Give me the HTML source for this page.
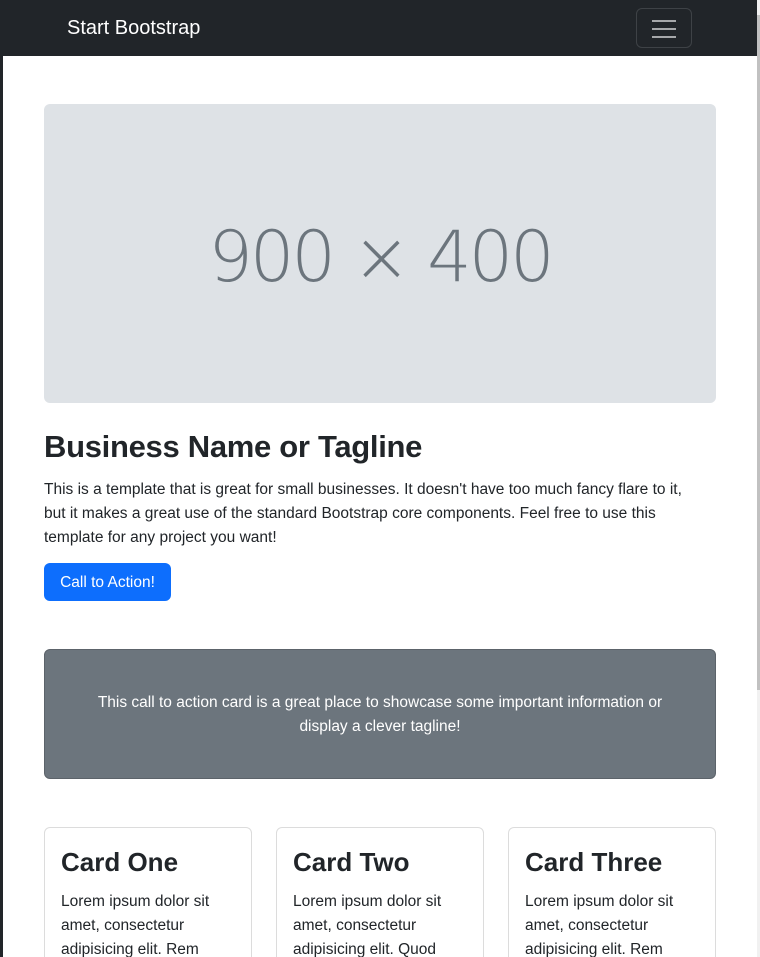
<!DOCTYPE html>
<html><head><meta charset="utf-8"><style>
*{box-sizing:border-box;margin:0;padding:0}
html{width:760px;height:957px;overflow:hidden}
body{width:760px;height:957px;overflow:hidden;background:#212529;font-family:"Liberation Sans","DejaVu Sans",sans-serif;color:#212529;position:relative}
.main{position:absolute;left:3px;top:56px;width:754px;height:901px;background:#fff}
.nav{position:absolute;left:0;top:0;width:757px;height:56px;background:#212529}
.brand{position:absolute;left:67px;top:17px;color:#fff;font-size:20px}
.tog{position:absolute;left:636px;top:8px;width:56px;height:40px;border:1px solid #3e4246;border-radius:6px}
.tog i{position:absolute;left:15px;width:24px;height:2px;background:#a6a8aa}
.sb{position:absolute;left:757px;top:0;width:3px;height:957px;background:#f1f1f1}
.sb i{position:absolute;left:0;top:15px;width:3px;height:675px;background:#c1c1c1}
.abs{position:absolute}
.ph{left:44px;top:104px;width:672px;height:299px;background:#dee2e6;border-radius:6px;color:#6c757d;font-size:70px;text-align:center;line-height:307px;letter-spacing:-3px;font-family:"DejaVu Sans ExtraLight","DejaVu Sans Light","Liberation Sans",sans-serif;font-weight:200}
h1{position:absolute;left:44px;top:429px;font-size:31px;font-weight:bold;letter-spacing:-0.3px}
.p{left:44px;top:478px;font-size:15.5px;line-height:24px;width:690px}
.btn{left:44px;top:563px;width:127px;height:38px;background:#0d6efd;border-radius:6px;color:#fff;font-size:15.5px;line-height:40px;text-align:center}
.cta{left:44px;top:649px;width:672px;height:130px;background:#6c757d;border:1px solid #5c636a;border-radius:6px;color:#fff;font-size:15.5px;line-height:24px;text-align:center;padding-top:41px}
.card{top:827px;width:208px;height:140px;border:1px solid #dcdcdc;border-radius:6px;padding:16px}
.card h2{font-size:26px;font-weight:bold;margin-top:3px;height:36px}
.card p{font-size:15.5px;line-height:24px;margin-top:7px}
</style></head><body>
<div class="main"></div>
<div class="nav"><div class="brand">Start Bootstrap</div>
<div class="tog"><i style="top:11px"></i><i style="top:19px"></i><i style="top:27px"></i></div></div>
<div class="sb"><i></i></div>
<div class="abs ph">900 × 400</div>
<h1>Business Name or Tagline</h1>
<div class="abs p">This is a template that is great for small businesses. It doesn't have too much fancy flare to it,<br>but it makes a great use of the standard Bootstrap core components. Feel free to use this<br>template for any project you want!</div>
<div class="abs btn">Call to Action!</div>
<div class="abs cta">This call to action card is a great place to showcase some important information or<br>display a clever tagline!</div>
<div class="abs card" style="left:44px"><h2>Card One</h2><p>Lorem ipsum dolor sit<br>amet, consectetur<br>adipisicing elit. Rem</p></div>
<div class="abs card" style="left:276px"><h2>Card Two</h2><p>Lorem ipsum dolor sit<br>amet, consectetur<br>adipisicing elit. Quod</p></div>
<div class="abs card" style="left:508px"><h2>Card Three</h2><p>Lorem ipsum dolor sit<br>amet, consectetur<br>adipisicing elit. Rem</p></div>
</body></html>
